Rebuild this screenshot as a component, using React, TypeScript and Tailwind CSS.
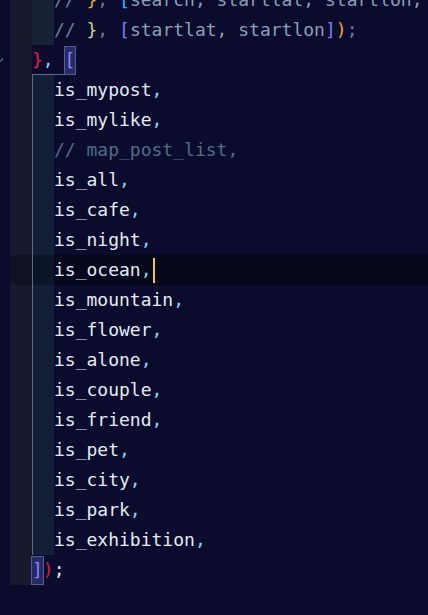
type Tok = [string, string];

const W = "#e4ebf3";
const C = "#86d6f2";
const SL = "#6b7f95";
const CM = "#8b9fb5";

const idents = [
  "is_mypost",
  "is_mylike",
  "// map_post_list,",
  "is_all",
  "is_cafe",
  "is_night",
  "is_ocean",
  "is_mountain",
  "is_flower",
  "is_alone",
  "is_couple",
  "is_friend",
  "is_pet",
  "is_city",
  "is_park",
  "is_exhibition",
];

function Toks({ toks }: { toks: Tok[] }) {
  return (
    <>
      {toks.map(([t, c], i) => (
        <span key={i} style={{ color: c }}>
          {t}
        </span>
      ))}
    </>
  );
}

function BracketBox({ ch }: { ch: string }) {
  return (
    <span className="inline-flex h-[27px] items-center bg-[#272b63] outline outline-1 outline-[#565c94] text-[#8585ff]">
      {ch}
    </span>
  );
}

export default function App() {
  return (
    <div className="h-[615px] w-full overflow-hidden bg-[#0a0b2d] font-['DejaVu_Sans_Mono',monospace] text-[18px] leading-[30px] whitespace-pre">
      <div className="-mt-[15px] flex flex-col">
        {/* top comment lines */}
        <div className="flex h-[30px]">
          <div className="w-[10px]" />
          <div className="w-[22px] bg-[#19192d]" />
          <div className="w-[22px] bg-[#172236]" />
          <div>
            <Toks
              toks={[
                ["// ", SL],
                ["}", "#dca646"],
                [", ", SL],
                ["[", "#3eb3ff"],
                ["search, startlat, startlon,", CM],
              ]}
            />
          </div>
        </div>
        <div className="flex h-[30px]">
          <div className="w-[10px]" />
          <div className="w-[22px] bg-[#19192d]" />
          <div className="w-[22px] bg-[#172236]" />
          <div>
            <Toks
              toks={[
                ["// ", SL],
                ["}", "#d8d0a6"],
                [", ", SL],
                ["[", "#7f7ff2"],
                ["startlat, startlon", CM],
                ["]", "#7f7ff2"],
                [")", "#eba233"],
                [";", SL],
              ]}
            />
          </div>
        </div>

        {/* }, [ */}
        <div className="relative flex h-[30px]">
          <div className="flex w-[10px] items-center">
            <svg width="8" height="8" viewBox="0 0 8 8" className="-ml-[4px]">
              <path d="M1 2.5 L4 5.5 L7 2.5" stroke="#6b7385" strokeWidth="1.2" fill="none" />
            </svg>
          </div>
          <div className="w-[22px] bg-[#19192d]" />
          <div className="flex items-center">
            <span className="text-[#e3213f]">{"}"}</span>
            <span style={{ color: C }}>{","}</span>
            <span>{" "}</span>
            <BracketBox ch="[" />
          </div>
          <div className="absolute bottom-0 left-[32px] h-px w-[32px] bg-[#5c6c84]" />
        </div>

        {idents.map((name, i) => {
          const current = name === "is_ocean";
          const comment = name.startsWith("//");
          return (
            <div key={i} className={`flex h-[30px] ${current ? "bg-[#05071b]" : ""}`}>
              <div className={`w-[10px] ${current ? "bg-[#0a0b2d]" : ""}`} />
              <div className={`w-[22px] ${current ? "bg-[#111224]" : "bg-[#19192d]"}`} />
              <div
                className={`w-[22px] border-l border-[#5c6c84] ${
                  current ? "bg-[#0c1527]" : "bg-[#131f36]"
                }`}
              />
              <div className="flex items-center">
                {comment ? (
                  <span className="text-[#4f6d89]">{name}</span>
                ) : (
                  <>
                    <span style={{ color: W }}>{name}</span>
                    <span style={{ color: C }}>,</span>
                  </>
                )}
                {current && <span className="ml-px inline-block h-[25px] w-[2px] bg-[#f2c24f]" />}
              </div>
            </div>
          );
        })}

        {/* ]); */}
        <div className="flex h-[30px]">
          <div className="w-[10px]" />
          <div className="w-[22px] bg-[#19192d]" />
          <div className="flex items-center">
            <BracketBox ch="]" />
            <span className="text-[#d3203a]">)</span>
            <span style={{ color: W }}>;</span>
          </div>
        </div>
      </div>
    </div>
  );
}
